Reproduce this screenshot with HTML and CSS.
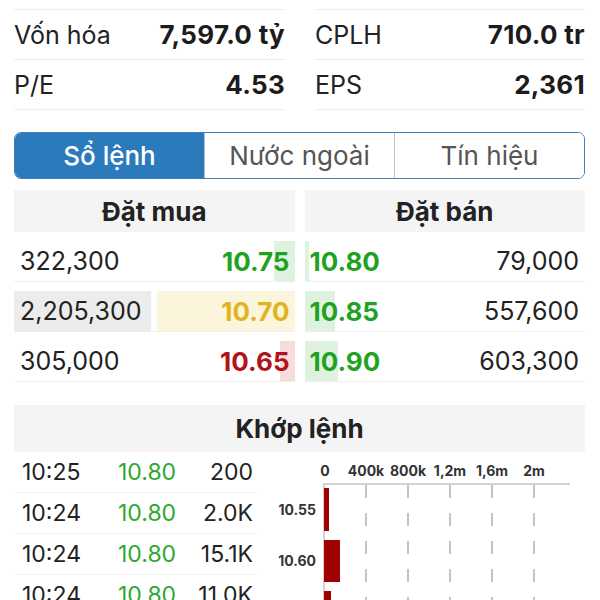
FILE: index.html
```html
<!DOCTYPE html>
<html lang="vi">
<head>
    <meta charset="UTF-8">
    <meta name="viewport" content="width=device-width, initial-scale=1.0">
    <title>Sổ lệnh</title>
    <link rel="stylesheet" href="styles.css">
</head>
<body>
    <div class="stats">
        <div class="stat cut"><span>KL (TB)</span><b>1.2 tr</b></div>
        <div class="stat cut"><span>Giá (TB)</span><b>10.7</b></div>
        <div class="stat"><span>Vốn hóa</span><b>7,597.0 tỷ</b></div>
        <div class="stat"><span>CPLH</span><b>710.0 tr</b></div>
        <div class="stat"><span>P/E</span><b>4.53</b></div>
        <div class="stat"><span>EPS</span><b>2,361</b></div>
    </div>

    <div class="tabs">
        <div class="tab active">Sổ lệnh</div>
        <div class="tab">Nước ngoài</div>
        <div class="tab">Tín hiệu</div>
    </div>

    <div class="book">
        <div class="side buy">
            <div class="head">Đặt mua</div>
            <div class="row">
                <span class="qty">322,300</span>
                <span class="price up"><i class="bar" style="width: 21px"></i><em>10.75</em></span>
            </div>
            <div class="row">
                <span class="qty ref">2,205,300</span>
                <span class="price ref"><em>10.70</em></span>
            </div>
            <div class="row">
                <span class="qty">305,000</span>
                <span class="price down"><i class="bar" style="width: 15px"></i><em>10.65</em></span>
            </div>
        </div>
        <div class="side sell">
            <div class="head">Đặt bán</div>
            <div class="row">
                <span class="price up"><i class="bar" style="width: 4px"></i><em>10.80</em></span>
                <span class="qty">79,000</span>
            </div>
            <div class="row">
                <span class="price up"><i class="bar" style="width: 30px"></i><em>10.85</em></span>
                <span class="qty">557,600</span>
            </div>
            <div class="row">
                <span class="price up"><i class="bar" style="width: 33px"></i><em>10.90</em></span>
                <span class="qty">603,300</span>
            </div>
        </div>
    </div>

    <div class="match-head">Khớp lệnh</div>
    <div class="match">
        <div class="trades">
            <div class="trade"><span class="time">10:25</span><span class="tp">10.80</span><span class="vol">200</span></div>
            <div class="trade"><span class="time">10:24</span><span class="tp">10.80</span><span class="vol">2.0K</span></div>
            <div class="trade"><span class="time">10:24</span><span class="tp">10.80</span><span class="vol">15.1K</span></div>
            <div class="trade"><span class="time">10:24</span><span class="tp">10.80</span><span class="vol">11.0K</span></div>
        </div>
        <svg class="chart" width="323" height="150" viewBox="0 0 323 150">
            <g class="ticks">
                <text x="63" y="24">0</text>
                <text x="104" y="24">400k</text>
                <text x="146" y="24">800k</text>
                <text x="188" y="24">1,2m</text>
                <text x="230" y="24">1,6m</text>
                <text x="272" y="24">2m</text>
            </g>
            <g class="grid">
                <line x1="104" y1="33" x2="104" y2="150"/>
                <line x1="146" y1="33" x2="146" y2="150"/>
                <line x1="188" y1="33" x2="188" y2="150"/>
                <line x1="230" y1="33" x2="230" y2="150"/>
                <line x1="272" y1="33" x2="272" y2="150"/>
            </g>
            <line class="axis" x1="61" y1="32" x2="308" y2="32"/>
            <line class="axis" x1="62" y1="32" x2="62" y2="150"/>
            <g class="bars">
                <rect x="62" y="36" width="5" height="43"/>
                <rect x="62" y="88" width="16" height="42"/>
                <rect x="62" y="139" width="7" height="20"/>
            </g>
            <g class="levels">
                <text x="54" y="63">10.55</text>
                <text x="54" y="114">10.60</text>
            </g>
        </svg>
    </div>
</body>
</html>
```

FILE: styles.css
```css
body {
  font-family: Inter, "Noto Sans", sans-serif;
  margin: 0;
  padding: 0 15px 0 14px;
  background: #fff;
  color: #222;
  overflow: hidden;
}

.stats {
  display: grid;
  grid-template-columns: 271px 1fr;
  column-gap: 30px;
  margin-top: -40px;
}

.stat {
  height: 49px;
  display: flex;
  justify-content: space-between;
  align-items: center;
  border-bottom: 1px solid #ededed;
  font-size: 25px;
  white-space: nowrap;
}

.stat.cut {
  align-items: flex-start;
  padding-top: 8px;
  box-sizing: border-box;
  height: 50px;
  overflow: hidden;
}

.stat span {
  color: #222;
}

.stat b {
  font-size: 26px;
  font-weight: 700;
  letter-spacing: 0.3px;
  color: #1c1c1c;
}

.tabs {
  display: flex;
  margin-top: 22px;
  height: 45px;
  border: 1.5px solid #3b80bf;
  border-radius: 7px;
  overflow: hidden;
}

.tab {
  flex: 1;
  display: flex;
  align-items: center;
  justify-content: center;
  font-size: 26px;
  color: #555;
  background: #fff;
}

.tab + .tab {
  border-left: 1px solid #b7c3cf;
}

.tab.active {
  background: #2b7bbc;
  color: #fff;
  font-weight: 500;
}

.book {
  display: grid;
  grid-template-columns: 1fr 1fr;
  column-gap: 10px;
  margin-top: 11px;
}

.head {
  height: 42px;
  display: flex;
  align-items: center;
  justify-content: center;
  background: #f4f4f4;
  font-size: 26px;
  font-weight: 700;
}

.row {
  height: 40px;
  padding-top: 9px;
  display: grid;
  grid-template-columns: 1fr 1fr;
  column-gap: 6px;
  border-bottom: 1px solid #efefef;
  font-size: 25px;
}

.qty {
  display: flex;
  align-items: center;
  padding-left: 6px;
}

.sell .qty {
  justify-content: flex-end;
  padding: 0 6px 0 0;
}

.price {
  position: relative;
  display: flex;
  align-items: center;
  justify-content: flex-end;
  padding-right: 5px;
  font-size: 26px;
  font-weight: 700;
}

.sell .price {
  justify-content: flex-start;
  padding: 0 0 0 5px;
}

.price em {
  position: relative;
  font-style: normal;
}

.bar {
  position: absolute;
  top: 0;
  bottom: 0;
  right: 0;
  background: #dff2df;
}

.sell .bar {
  left: 0;
  right: auto;
}

.up {
  color: #1fa31f;
}

.down {
  color: #b1121c;
}

.down .bar {
  background: #f8dcdc;
}

.qty.ref {
  background: #ececec;
}

.price.ref {
  background: #fbf5dc;
  color: #e1b41e;
}

.match-head {
  margin-top: 23px;
  height: 47px;
  display: flex;
  align-items: center;
  justify-content: center;
  background: #f4f4f4;
  font-size: 26px;
  font-weight: 700;
}

.match {
  display: flex;
  gap: 4px;
}

.trades {
  width: 244px;
  flex: none;
}

.trade {
  height: 40px;
  display: flex;
  align-items: center;
  border-bottom: 1px solid #f0f0f0;
  font-size: 23px;
  color: #222;
}

.time {
  width: 104px;
  padding-left: 8px;
  box-sizing: border-box;
}

.tp {
  color: #2ea82e;
}

.vol {
  flex: 1;
  text-align: right;
  padding-right: 5px;
}

.chart {
  display: block;
  flex: none;
}

.ticks text {
  font-size: 14px;
  font-weight: 700;
  fill: #333;
  text-anchor: middle;
}

.levels text {
  font-size: 14px;
  font-weight: 700;
  fill: #333;
  text-anchor: end;
}

.grid line {
  stroke: #b0b0b0;
  stroke-width: 1.5;
  stroke-dasharray: 13 15;
}

.axis {
  stroke: #c4c4c4;
  stroke-width: 1.5;
}

.bars rect {
  fill: #a10000;
}
```
